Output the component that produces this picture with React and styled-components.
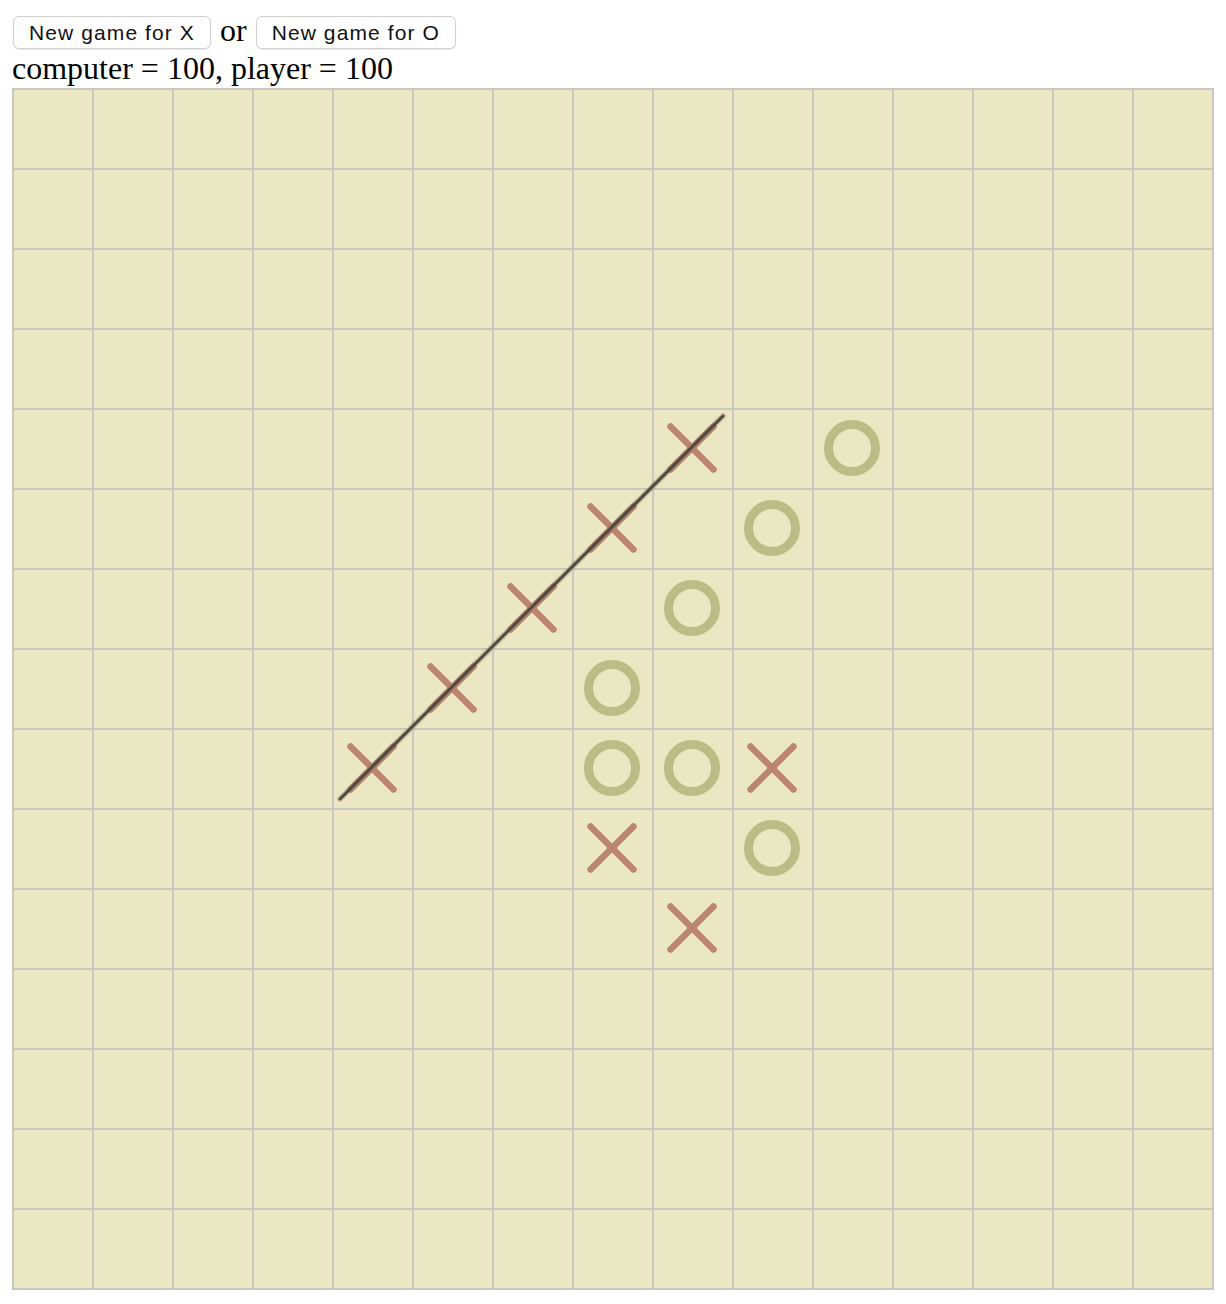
import styled, { createGlobalStyle } from "styled-components";

const GlobalStyle = createGlobalStyle`
  body {
    margin: 0;
    background: #fff;
    font-family: "Liberation Serif", "Times New Roman", serif;
  }
`;

const SIZE = 15;
const CELL = 80;

const Page = styled.div`
  padding: 16px 12px 12px 13px;
`;

const Controls = styled.div`
  display: flex;
  align-items: center;
  gap: 9px;
  height: 33px;
`;

const Button = styled.button`
  height: 33px;
  padding: 0 15px;
  background: #fff;
  border: 1px solid #cfcfcf;
  border-radius: 6px;
  box-shadow: 0 1px 1px rgba(0, 0, 0, 0.08);
  font-family: "Liberation Sans", Arial, sans-serif;
  font-size: 21px;
  letter-spacing: 1.1px;
  color: #111;
  cursor: pointer;
`;

const Or = styled.span`
  font-size: 32px;
  line-height: 33px;
  margin-top: -4px;
`;

const Score = styled.div`
  font-size: 32px;
  line-height: 39px;
  margin-left: -1px;
  color: #000;
`;

const BoardWrap = styled.div`
  position: relative;
  margin-left: -1px;
  width: ${SIZE * CELL + 2}px;
`;

const Board = styled.div`
  display: grid;
  grid-template-columns: repeat(${SIZE}, ${CELL - 2}px);
  grid-auto-rows: ${CELL - 2}px;
  gap: 2px;
  padding: 2px;
  background: #c8c8c0;
`;

const Cell = styled.div`
  background: #ece7c3;
  display: flex;
  align-items: center;
  justify-content: center;
`;

const WinLine = styled.svg`
  position: absolute;
  left: 0;
  top: 0;
  pointer-events: none;
`;

const moves = {
  "4,8": "x",
  "5,7": "x",
  "6,6": "x",
  "7,5": "x",
  "8,4": "x",
  "9,8": "x",
  "7,9": "x",
  "8,10": "x",
  "10,4": "o",
  "9,5": "o",
  "8,6": "o",
  "7,7": "o",
  "7,8": "o",
  "8,8": "o",
  "9,9": "o",
};

function Mark({ kind }) {
  if (kind === "x") {
    return (
      <svg width="78" height="78" viewBox="-38 -38 78 78">
        <g stroke="#bd8470" strokeWidth="6.5" strokeLinecap="round">
          <line x1="-21.5" y1="-21.5" x2="21.5" y2="21.5" />
          <line x1="21.5" y1="-21.5" x2="-21.5" y2="21.5" />
        </g>
      </svg>
    );
  }
  return (
    <svg width="78" height="78" viewBox="-38 -38 78 78">
      <circle r="23.5" fill="none" stroke="#bcbd86" strokeWidth="9" />
    </svg>
  );
}

export default function App() {
  const cells = [];
  for (let r = 0; r < SIZE; r++) {
    for (let c = 0; c < SIZE; c++) {
      const kind = moves[`${c},${r}`];
      cells.push(<Cell key={`${c}-${r}`}>{kind && <Mark kind={kind} />}</Cell>);
    }
  }

  return (
    <Page>
      <GlobalStyle />
      <Controls>
        <Button>New game for X</Button>
        <Or>or</Or>
        <Button>New game for O</Button>
      </Controls>
      <Score>computer = 100, player = 100</Score>
      <BoardWrap>
        <Board>{cells}</Board>
        <WinLine width={SIZE * CELL + 2} height={SIZE * CELL + 2}>
          <line
            x1="328"
            y1="711"
            x2="711"
            y2="328"
            stroke="#8a6a58"
            strokeOpacity="0.35"
            strokeWidth="6"
            strokeLinecap="round"
          />
          <line
            x1="328"
            y1="711"
            x2="711"
            y2="328"
            stroke="#4f4a40"
            strokeWidth="3"
            strokeLinecap="round"
          />
        </WinLine>
      </BoardWrap>
    </Page>
  );
}
